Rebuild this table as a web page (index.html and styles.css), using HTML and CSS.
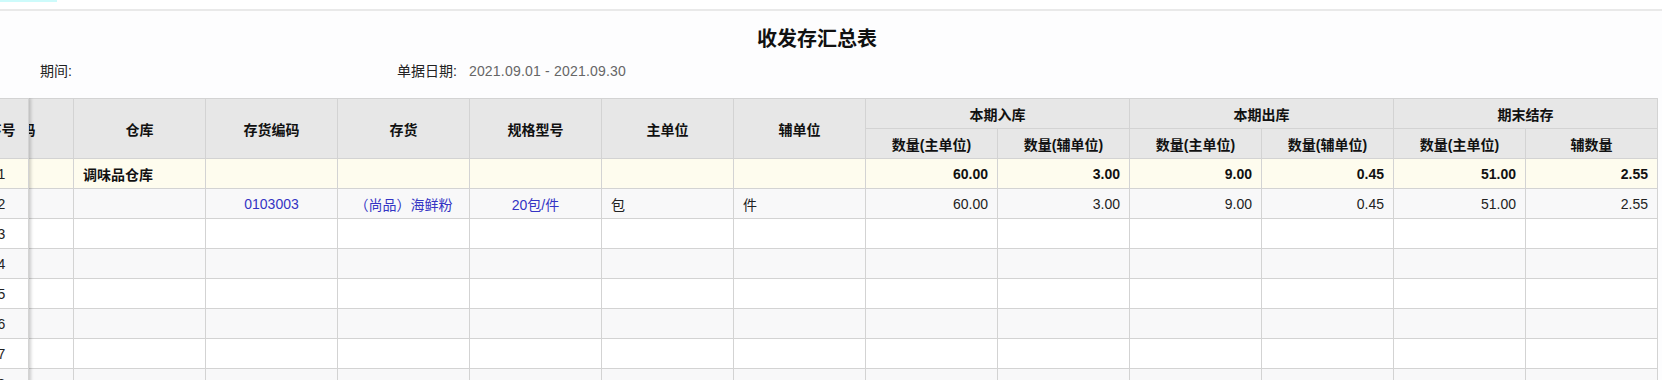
FILE: index.html
```html
<!DOCTYPE html>
<html lang="zh-CN">
<head>
<meta charset="utf-8">
<title>收发存汇总表</title>
<link rel="stylesheet" href="styles.css">
</head>
<body>
<div class="topbar"><div class="tab-mark"></div></div>
<div class="report">
  <h1 class="title">收发存汇总表</h1>
  <div class="meta">
    <div class="meta-item meta-period"><span class="label">期间:</span></div>
    <div class="meta-item"><span class="label">单据日期:</span><span class="value">2021.09.01 - 2021.09.30</span></div>
  </div>
  <div class="grid-wrap">
    <table class="grid">
      <colgroup>
        <col class="col"><col class="col"><col class="col"><col class="col"><col class="col"><col class="col"><col class="col"><col class="col"><col class="col"><col class="col"><col class="col"><col class="col"><col class="col">
      </colgroup>
      <thead>
        <tr>
          <th rowspan="2">单据编码</th>
          <th rowspan="2">仓库</th>
          <th rowspan="2">存货编码</th>
          <th rowspan="2">存货</th>
          <th rowspan="2">规格型号</th>
          <th rowspan="2">主单位</th>
          <th rowspan="2">辅单位</th>
          <th colspan="2">本期入库</th>
          <th colspan="2">本期出库</th>
          <th colspan="2">期末结存</th>
        </tr>
        <tr>
          <th>数量(主单位)</th>
          <th>数量(辅单位)</th>
          <th>数量(主单位)</th>
          <th>数量(辅单位)</th>
          <th>数量(主单位)</th>
          <th>辅数量</th>
        </tr>
      </thead>
      <tbody>
        <tr class="sum">
          <td></td><td class="l">调味品仓库</td><td></td><td></td><td></td><td></td><td></td>
          <td class="r">60.00</td><td class="r">3.00</td><td class="r">9.00</td><td class="r">0.45</td><td class="r">51.00</td><td class="r">2.55</td>
        </tr>
        <tr class="even">
          <td></td><td></td><td class="link">0103003</td><td class="link">（尚品）海鲜粉</td><td class="link">20包/件</td><td class="l">包</td><td class="l">件</td>
          <td class="r">60.00</td><td class="r">3.00</td><td class="r">9.00</td><td class="r">0.45</td><td class="r">51.00</td><td class="r">2.55</td>
        </tr>
        <tr><td></td><td></td><td></td><td></td><td></td><td></td><td></td><td></td><td></td><td></td><td></td><td></td><td></td></tr>
        <tr class="even"><td></td><td></td><td></td><td></td><td></td><td></td><td></td><td></td><td></td><td></td><td></td><td></td><td></td></tr>
        <tr><td></td><td></td><td></td><td></td><td></td><td></td><td></td><td></td><td></td><td></td><td></td><td></td><td></td></tr>
        <tr class="even"><td></td><td></td><td></td><td></td><td></td><td></td><td></td><td></td><td></td><td></td><td></td><td></td><td></td></tr>
        <tr><td></td><td></td><td></td><td></td><td></td><td></td><td></td><td></td><td></td><td></td><td></td><td></td><td></td></tr>
        <tr class="even"><td></td><td></td><td></td><td></td><td></td><td></td><td></td><td></td><td></td><td></td><td></td><td></td><td></td></tr>
      </tbody>
    </table>
    <div class="frozen">
      <div class="fz-head">序号</div>
      <div class="fz-cell sum">1</div>
      <div class="fz-cell even">2</div>
      <div class="fz-cell">3</div>
      <div class="fz-cell even">4</div>
      <div class="fz-cell">5</div>
      <div class="fz-cell even">6</div>
      <div class="fz-cell">7</div>
      <div class="fz-cell even">8</div>
    </div>
  </div>
</div>
</body>
</html>
```

FILE: styles.css
```css
* { box-sizing: border-box; }
html, body { margin: 0; padding: 0; }
body {
  width: 1662px;
  height: 380px;
  overflow: hidden;
  background: #fdfdfe;
  font-family: "Liberation Sans", "Noto Sans CJK SC", sans-serif;
  font-size: 14px;
  color: #222;
}
.topbar {
  height: 11px;
  background: #ffffff;
  border-bottom: 2px solid #e9e9e9;
}
.tab-mark {
  width: 57px;
  height: 2px;
  background: #cdfbfb;
}
.report { padding: 0; }
.title {
  margin: 18px 0 0;
  padding-right: 28px;
  text-align: center;
  font-size: 20px;
  line-height: 20px;
  font-weight: bold;
  color: #111;
}
.meta {
  display: flex;
  margin-top: 12px;
  padding-left: 40px;
  height: 20px;
  line-height: 20px;
}
.meta-period { width: 357px; }
.meta-item .label { color: #222; }
.meta-item .value { margin-left: 12px; color: #666; letter-spacing: 0.2px; }
.grid-wrap {
  position: relative;
  margin-top: 17px;
  height: 282px;
  overflow: hidden;
}
.grid {
  margin-left: -58px;
  border-collapse: separate;
  border-spacing: 0;
  table-layout: fixed;
  width: 1716px;
  border-top: 1px solid #d3d3d3;
}
.col { width: 132px; }
.grid th, .grid td {
  height: 30px;
  padding: 0 9px;
  border-right: 1px solid #d3d3d3;
  border-bottom: 1px solid #d3d3d3;
  vertical-align: middle;
  white-space: nowrap;
  overflow: hidden;
}
.grid th {
  background: #e7e7e7;
  font-weight: bold;
  text-align: center;
  color: #111;
}
.grid td { background: #ffffff; }
.grid tr.even td { background: #f8f8f9; }
.grid tr.sum td { background: #fefcee; font-weight: bold; color: #111; }
.grid td.l { text-align: left; }
.grid td.r { text-align: right; }
.grid td.link { text-align: center; color: #3434c4; }
.frozen {
  position: absolute;
  top: 0;
  left: -25px;
  width: 54px;
  border-top: 1px solid #d3d3d3;
  box-shadow: 2px 0 3px rgba(0, 0, 0, 0.18);
  background: #fff;
}
.fz-head {
  height: 60px;
  display: flex;
  align-items: center;
  justify-content: center;
  background: #e7e7e7;
  font-weight: bold;
  color: #111;
  border-bottom: 1px solid #d3d3d3;
  border-right: 1px solid #d3d3d3;
}
.fz-cell {
  height: 30px;
  display: flex;
  align-items: center;
  justify-content: center;
  background: #fff;
  border-bottom: 1px solid #d3d3d3;
  border-right: 1px solid #d3d3d3;
}
.fz-cell.even { background: #f8f8f9; }
.fz-cell.sum { background: #fefcee; }
```
